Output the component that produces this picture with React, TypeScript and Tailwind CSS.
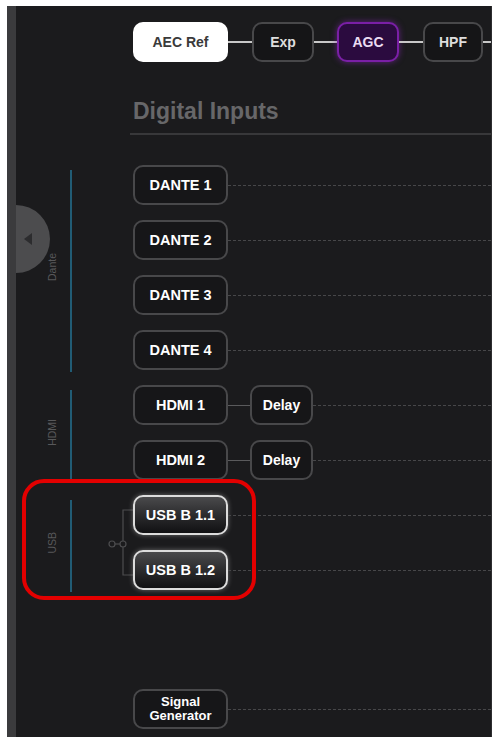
import React from "react";

const FONT = "font-['Liberation_Sans',Arial,Helvetica,sans-serif]";

type NodeKind = "plain" | "glossy";

function NodeButton({
  children,
  kind = "plain",
  width = "w-[95px]",
}: {
  children: React.ReactNode;
  kind?: NodeKind;
  width?: string;
}) {
  const base =
    "h-[40px] shrink-0 rounded-[10px] border-2 flex items-center justify-center text-center font-bold text-white";
  const look =
    kind === "glossy"
      ? "border-[#dcdcdc] bg-linear-to-b from-[#4a4a4c] to-[#111113] shadow-[0_0_5px_rgba(255,255,255,0.35)]"
      : "border-[#48484a] bg-[#161618]";
  return <div className={`${base} ${look} ${width}`}>{children}</div>;
}

function Dashed() {
  return <div className="flex-1 border-t border-dashed border-[#474749]" />;
}

function InputRow({
  label,
  kind,
  delay,
  small,
}: {
  label: React.ReactNode;
  kind?: NodeKind;
  delay?: boolean;
  small?: boolean;
}) {
  return (
    <div className="flex h-[40px] items-center">
      <NodeButton kind={kind}>
        <span className={small ? "text-[13px] leading-[14px]" : "text-[14.5px] leading-[15px]"}>{label}</span>
      </NodeButton>
      {delay ? (
        <>
          <div className="h-px w-[22px] bg-[#5a5a5c]" />
          <NodeButton width="w-[63px]">
            <span className="text-[14px]">Delay</span>
          </NodeButton>
        </>
      ) : null}
      <Dashed />
    </div>
  );
}

function UsbLink() {
  return (
    <svg width="27" height="95" viewBox="0 0 27 95" className="shrink-0">
      <path d="M27 15 H17 V80 H27" fill="none" stroke="#4d4d4f" strokeWidth="1.2" />
      <circle cx="6" cy="49" r="3" fill="none" stroke="#4d4d4f" strokeWidth="1.2" />
      <line x1="9" y1="49" x2="14" y2="49" stroke="#4d4d4f" strokeWidth="1.2" />
      <circle cx="17" cy="49" r="3" fill="#1b1b1d" stroke="#4d4d4f" strokeWidth="1.2" />
    </svg>
  );
}

function Group({
  title,
  children,
  link,
}: {
  title: string;
  children: React.ReactNode;
  link?: boolean;
}) {
  return (
    <div className="flex">
      <div className="flex w-[117px] shrink-0 items-stretch pl-[30px]">
        <div className="flex w-[12px] items-center justify-center">
          <span className="rotate-180 text-[10.5px] leading-none text-[#58585a] [writing-mode:vertical-rl]">
            {title}
          </span>
        </div>
        <div className="ml-[12px] mt-[5px] mb-[-2px] w-[2px] bg-[#215c75]" />
        <div className="ml-auto flex items-center">{link ? <UsbLink /> : null}</div>
      </div>
      <div className="flex flex-1 flex-col gap-[15px]">{children}</div>
    </div>
  );
}

function Chain() {
  const link = <div className="h-[2px] w-[24px] bg-[#c8c8c8]" />;
  return (
    <div className="mt-[16px] flex h-[40px] items-center pl-[117px]">
      <div className="flex h-[40px] w-[95px] items-center justify-center rounded-[10px] bg-white text-[14px] font-bold text-[#3a3a3a]">
        AEC Ref
      </div>
      {link}
      <div className="flex h-[40px] w-[62px] items-center justify-center rounded-[10px] border-2 border-[#48484a] bg-[#151517] text-[14px] font-bold text-[#dddddd]">
        Exp
      </div>
      <div className="h-[2px] w-[23px] bg-[#c8c8c8]" />
      <div className="flex h-[40px] w-[62px] items-center justify-center rounded-[10px] border-2 border-[#7a1fa6] bg-[#2b0b3f] text-[14px] font-bold text-[#eadcf2] shadow-[0_0_6px_rgba(140,40,190,0.6)]">
        AGC
      </div>
      {link}
      <div className="flex h-[40px] w-[60px] items-center justify-center rounded-[10px] border-2 border-[#48484a] bg-[#151517] text-[14px] font-bold text-[#dddddd]">
        HPF
      </div>
      <div className="h-[2px] flex-1 bg-[#c8c8c8]" />
    </div>
  );
}

export default function App() {
  return (
    <div className={`relative h-[737px] w-[496px] overflow-hidden bg-white pt-[6px] pl-[7px] pr-[4px] ${FONT}`}>
      <div className="flex h-[731px] bg-[#1b1b1d]">
        {/* collapsed sidebar rail */}
        <div className="w-[9px] shrink-0 bg-[#3b3b3d]" />

        <div className="flex flex-1 flex-col border-r border-[#2e2e30]">
          <Chain />

          <div className="mt-[36px] ml-[114px] border-b-2 border-[#38383a] pb-[7px] pl-[3px]">
            <span className="text-[23px] leading-[26px] font-bold text-[#676769]">Digital Inputs</span>
          </div>

          <div className="mt-[30px] flex flex-col gap-[15px]">
            <Group title="Dante">
              <InputRow label="DANTE 1" />
              <InputRow label="DANTE 2" />
              <InputRow label="DANTE 3" />
              <InputRow label="DANTE 4" />
            </Group>
            <Group title="HDMI">
              <InputRow label="HDMI 1" delay />
              <InputRow label="HDMI 2" delay />
            </Group>
            <Group title="USB" link>
              <InputRow label="USB B 1.1" kind="glossy" />
              <InputRow label="USB B 1.2" kind="glossy" />
            </Group>
          </div>

          <div className="mt-[99px] flex pl-[117px]">
            <div className="flex flex-1 flex-col">
              <InputRow
                small
                label={
                  <>
                    Signal
                    <br />
                    Generator
                  </>
                }
              />
            </div>
          </div>
        </div>
      </div>

      {/* sidebar expand handle */}
      <div className="absolute left-[16px] top-[205px] flex h-[68px] w-[34px] items-center rounded-r-full bg-[#4c4c4e] pl-[8px]">
        <div className="h-0 w-0 border-y-[6px] border-r-[8px] border-y-transparent border-r-[#2c2c2e]" />
      </div>

      {/* highlight around the USB group */}
      <div className="pointer-events-none absolute left-[22px] top-[479px] h-[121px] w-[234px] rounded-[22px] border-4 border-[#e30000]" />
    </div>
  );
}
